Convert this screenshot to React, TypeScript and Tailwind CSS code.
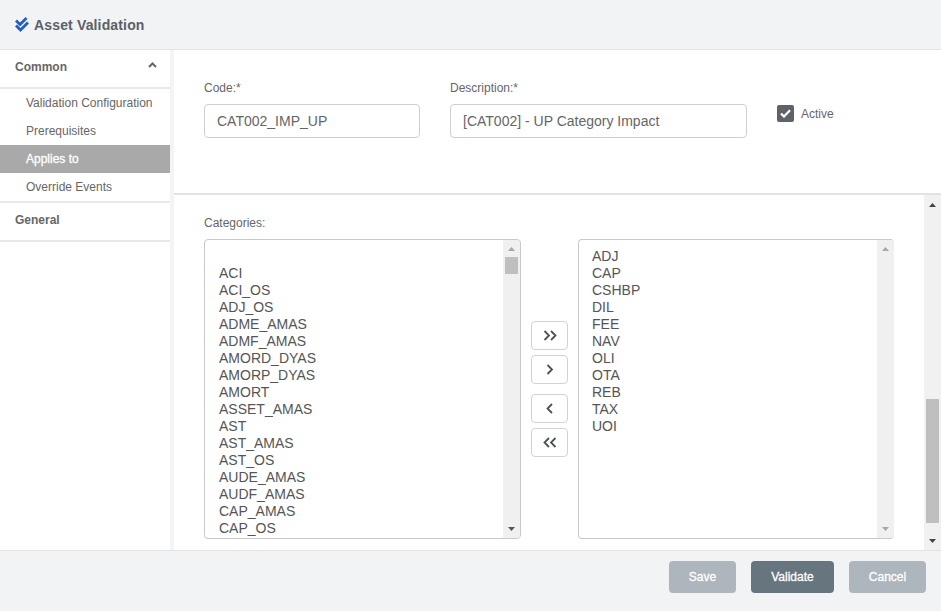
const LEFT_ITEMS = ["", "ACI", "ACI_OS", "ADJ_OS", "ADME_AMAS", "ADMF_AMAS", "AMORD_DYAS", "AMORP_DYAS", "AMORT", "ASSET_AMAS", "AST", "AST_AMAS", "AST_OS", "AUDE_AMAS", "AUDF_AMAS", "CAP_AMAS", "CAP_OS"];
const RIGHT_ITEMS = ["ADJ", "CAP", "CSHBP", "DIL", "FEE", "NAV", "OLI", "OTA", "REB", "TAX", "UOI"];

function Triangle({ up, className }: { up?: boolean; className: string }) {
  return (
    <svg width="7" height="4" viewBox="0 0 7 4" className={className} aria-hidden="true">
      <path d={up ? "M3.5 0 7 4H0z" : "M0 0h7L3.5 4z"} fill="currentColor" />
    </svg>
  );
}

function Chevrons({ dir, double }: { dir: "left" | "right"; double?: boolean }) {
  const one = dir === "right" ? "M1.5 1 6 5.5 1.5 10" : "M6 1 1.5 5.5 6 10";
  const two = dir === "right" ? "M8 1 12.5 5.5 8 10" : "M12.5 1 8 5.5 12.5 10";
  return (
    <svg width={double ? 14 : 8} height="11" viewBox={double ? "0 0 14 11" : "0 0 8 11"} fill="none" stroke="#4b5157" strokeWidth="1.8" aria-hidden="true">
      <path d={one} />
      {double ? <path d={two} /> : null}
    </svg>
  );
}

function ListBox({ items, thumb, className, textPad }: { items: string[]; thumb?: boolean; className: string; textPad: string }) {
  return (
    <div className={`flex h-[300px] overflow-hidden rounded-[4px] border border-[#c8c8c8] ${className}`}>
      <div className={`min-w-0 flex-1 overflow-hidden pt-[8px] text-[14px] leading-[17px] text-[#555] ${textPad}`}>
        {items.map((item, i) => (
          <div key={i} className="h-[17px]">{item}</div>
        ))}
      </div>
      <div className="flex w-[17px] shrink-0 flex-col items-center bg-[#f0f0f0] pt-[7px]">
        <Triangle up className="text-[#a8a8a8]" />
        {thumb ? <div className="mt-[6px] h-[17px] w-[13px] bg-[#bfbfbf]" /> : null}
        <Triangle className={`mt-auto mb-[7px] ${thumb ? "text-[#555]" : "text-[#a8a8a8]"}`} />
      </div>
    </div>
  );
}

function MoveButton({ dir, double, className = "" }: { dir: "left" | "right"; double?: boolean; className?: string }) {
  return (
    <button className={`flex h-[29px] w-[37px] items-center justify-center rounded-[4px] border border-[#d2d2d2] bg-white ${className}`}>
      <Chevrons dir={dir} double={double} />
    </button>
  );
}

export default function App() {
  return (
    <div className="flex h-[611px] w-[941px] flex-col overflow-hidden bg-white font-['Liberation_Sans',Arial,sans-serif] text-[12px] text-[#666]">
      <header className="flex h-[50px] shrink-0 items-center gap-[5px] border-b border-[#e3e3e3] bg-[#f2f3f5] pl-[15px]">
        <svg width="14" height="15" viewBox="0 0 14 15" fill="none" stroke="#2360bd" strokeWidth="2.8" aria-hidden="true">
          <path d="M1 3.5 5 7.5 11.5 1" />
          <path d="M1 8.5 5.5 13 13 5.5" />
        </svg>
        <h1 className="pt-[2px] text-[14px] font-bold tracking-[0.15px] text-[#5b6066]">Asset Validation</h1>
      </header>

      <div className="flex min-h-0 flex-1">
        <nav className="w-[170px] shrink-0 bg-white">
          <div className="flex h-[39px] items-center justify-between border-b-2 border-[#e8e8e8] pl-[15px] pr-[13px] pb-[4px] font-bold text-[#666]">
            <span>Common</span>
            <svg width="9" height="6" viewBox="0 0 9 6" fill="none" stroke="#666" strokeWidth="2" className="mb-[4px]" aria-hidden="true">
              <path d="M1 5 4.5 1.5 8 5" />
            </svg>
          </div>
          <ul className="border-b-2 border-[#e8e8e8]">
            <li className="flex h-[28px] items-center pl-[26px]">Validation Configuration</li>
            <li className="flex h-[28px] items-center pl-[26px]">Prerequisites</li>
            <li className="flex h-[28px] items-center bg-[#a9a9a9] pl-[26px] text-white [-webkit-text-stroke:0.3px_#fff]">Applies to</li>
            <li className="flex h-[28px] items-center pl-[26px]">Override Events</li>
          </ul>
          <div className="flex h-[39px] items-center border-b-2 border-[#e8e8e8] pl-[15px] pb-[3px] font-bold text-[#666]">General</div>
        </nav>

        <main className="flex min-w-0 flex-1 flex-col border-l-4 border-[#f3f4f6]">
          <section className="flex h-[145px] shrink-0 gap-[30px] border-b-2 border-[#e3e3e3] pl-[30px] pt-[31px]">
            <div className="w-[216px]">
              <label className="block h-[23px] leading-[14px]">Code:*</label>
              <div className="flex h-[34px] items-center rounded-[4px] border border-[#cfcfcf] pl-[12px] text-[14px] text-[#666]">CAT002_IMP_UP</div>
            </div>
            <div className="w-[297px]">
              <label className="block h-[23px] leading-[14px]">Description:*</label>
              <div className="flex h-[34px] items-center rounded-[4px] border border-[#cfcfcf] pl-[12px] text-[14px] text-[#666]">[CAT002] - UP Category Impact</div>
            </div>
            <div className="mt-[24px] flex h-[17px] items-center gap-[7px]">
              <span className="flex size-[17px] items-center justify-center rounded-[2px] bg-[#5f6368]">
                <svg width="11" height="9" viewBox="0 0 11 9" fill="none" stroke="#fff" strokeWidth="2.2" aria-hidden="true">
                  <path d="M1 4.5 4 7.5 10 1.2" />
                </svg>
              </span>
              <span>Active</span>
            </div>
          </section>

          <section className="flex min-h-0 flex-1">
            <div className="min-w-0 flex-1 pl-[30px] pt-[21px]">
              <label className="block h-[23px] leading-[14px]">Categories:</label>
              <div className="flex">
                <ListBox items={LEFT_ITEMS} thumb className="w-[317px]" textPad="pl-[14px]" />
                <div className="flex w-[57px] shrink-0 flex-col items-center pt-[82px]">
                  <MoveButton dir="right" double />
                  <MoveButton dir="right" className="mt-[5px]" />
                  <MoveButton dir="left" className="mt-[10px]" />
                  <MoveButton dir="left" double className="mt-[5px]" />
                </div>
                <ListBox items={RIGHT_ITEMS} className="w-[316px] border-r-0" textPad="pl-[13px]" />
              </div>
            </div>
            <div className="flex w-[17px] shrink-0 flex-col items-center bg-[#f1f1f1] pt-[8px]">
              <Triangle up className="text-[#444]" />
              <div className="mt-[192px] h-[124px] w-[13px] bg-[#bfbfbf]" />
              <Triangle className="mt-auto mb-[7px] text-[#444]" />
            </div>
          </section>
        </main>
      </div>

      <footer className="flex h-[61px] shrink-0 items-start justify-end gap-[15px] border-t border-[#e3e3e3] bg-[#f2f3f5] pr-[15px] pt-[10px] text-white [-webkit-text-stroke:0.3px_#fff]">
        <button className="h-[32px] w-[67px] rounded-[4px] bg-[#aeb6bd]">Save</button>
        <button className="h-[32px] w-[83px] rounded-[4px] bg-[#67757f]">Validate</button>
        <button className="h-[32px] w-[77px] rounded-[4px] bg-[#aeb6bd]">Cancel</button>
      </footer>
    </div>
  );
}
